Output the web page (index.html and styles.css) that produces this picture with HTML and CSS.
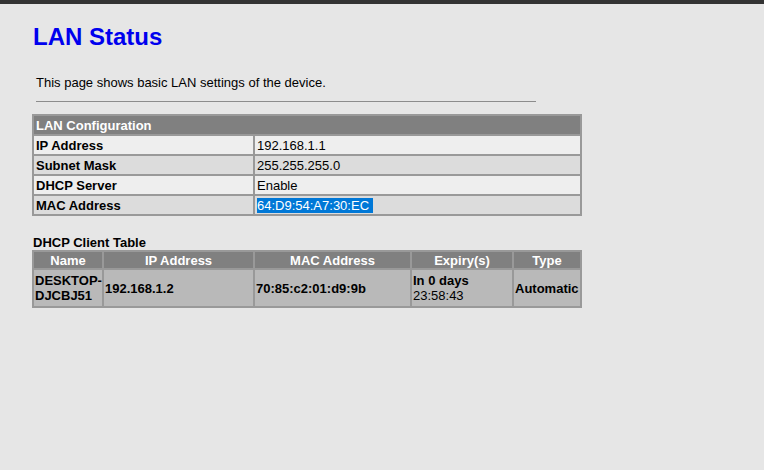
FILE: index.html
```html
<!DOCTYPE html>
<html lang="en">
<head>
    <meta charset="UTF-8">
    <title>LAN Status</title>
    <link rel="stylesheet" href="styles.css">
</head>
<body>
    <div class="page">
        <h1>LAN Status</h1>
        <p class="intro">This page shows basic LAN settings of the device.</p>
        <div class="rule"></div>

        <table class="config">
            <colgroup>
                <col class="label-col">
                <col>
            </colgroup>
            <tr class="head"><td colspan="2">LAN Configuration</td></tr>
            <tr class="light"><td class="label">IP Address</td><td>192.168.1.1</td></tr>
            <tr class="dark"><td class="label">Subnet Mask</td><td>255.255.255.0</td></tr>
            <tr class="light"><td class="label">DHCP Server</td><td>Enable</td></tr>
            <tr class="dark"><td class="label">MAC Address</td><td><span class="sel">64:D9:54:A7:30:EC&nbsp;</span></td></tr>
        </table>

        <h2>DHCP Client Table</h2>
        <table class="clients">
            <colgroup>
                <col class="c-name">
                <col class="c-ip">
                <col class="c-mac">
                <col class="c-exp">
                <col class="c-type">
            </colgroup>
            <tr class="head">
                <td>Name</td>
                <td>IP Address</td>
                <td>MAC Address</td>
                <td>Expiry(s)</td>
                <td>Type</td>
            </tr>
            <tr class="row">
                <td>DESKTOP-DJCBJ51</td>
                <td>192.168.1.2</td>
                <td>70:85:c2:01:d9:9b</td>
                <td>In 0 days <span class="thin">23:58:43</span></td>
                <td>Automatic</td>
            </tr>
        </table>
    </div>
</body>
</html>
```

FILE: styles.css
```css
html, body {
    margin: 0;
    padding: 0;
    height: 100%;
}

body {
    background: #e6e6e6;
    border-top: 4px solid #333333;
    box-sizing: border-box;
    font-family: "Liberation Sans", Arial, sans-serif;
    font-size: 13px;
    color: #000;
}

.page {
    padding: 19px 0 0 32px;
}

h1 {
    margin: 0 0 0 1px;
    font-size: 24px;
    line-height: 27px;
    color: #0000ee;
}

.intro {
    margin: 25px 0 0 4px;
    line-height: 15px;
}

.rule {
    width: 500px;
    margin: 11px 0 0 4px;
    border-top: 1px solid #8c8c8c;
}

table {
    width: 550px;
    border-collapse: collapse;
    table-layout: fixed;
}

td {
    border: 2px solid #999999;
    padding: 0 2px;
    line-height: 15px;
    white-space: nowrap;
}

.config {
    margin-top: 12px;
}

.config td {
    height: 18px;
}

.label-col {
    width: 221px;
}

.head td {
    background: #808080;
    color: #fff;
    font-weight: bold;
}

.light td {
    background: #eeeeee;
}

.dark td {
    background: #dcdcdc;
}

.label {
    font-weight: bold;
}

.sel {
    background: #0078d7;
    color: #fff;
}

h2 {
    margin: 19px 0 0 1px;
    font-size: 13px;
    line-height: 15px;
}

.clients {
    width: 548px;
}

.clients .head td {
    height: 16px;
    text-align: center;
}

.c-name { width: 70px; }
.c-ip { width: 151px; }
.c-mac { width: 157px; }
.c-exp { width: 102px; }
.c-type { width: 68px; }

.clients .row td {
    background: #b9b9b9;
    font-weight: bold;
    height: 36px;
    white-space: normal;
    padding: 0 1px;
}

.thin {
    font-weight: normal;
}
```
